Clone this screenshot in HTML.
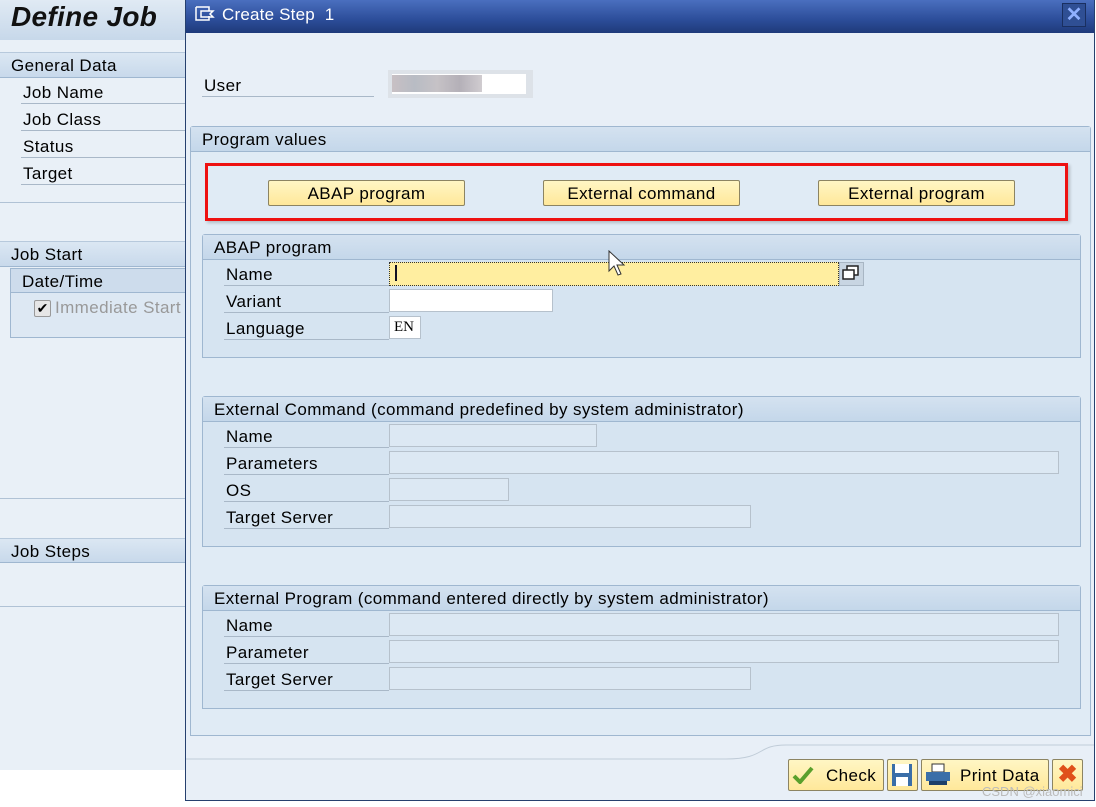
<!DOCTYPE html>
<html><head><meta charset="utf-8"><style>
*{box-sizing:border-box;margin:0;padding:0}
body{width:1096px;height:807px;position:relative;overflow:hidden;background:#fff;font-family:"Liberation Sans",Tahoma,sans-serif;font-size:17px;letter-spacing:0.4px;color:#000}
.a{position:absolute}
.lbl{position:absolute;height:24px;line-height:26px;border-bottom:1px solid #a9b8c8;padding-left:2px}
.fld{position:absolute;height:23px;border:1px solid #b6c1cc;background:#dce8f3}
.fw{background:#fff;border-color:#b6c1cc}
.grp{position:absolute;background:#d6e4f1;border:1px solid #9fb7d0;border-radius:3px 3px 0 0}
.gh{height:25px;line-height:25px;background:linear-gradient(#d4e2f0,#c4d7ea);border-bottom:1px solid #9fb7d0;padding-left:11px}
.btn{position:absolute;height:26px;border:1px solid #8c8462;border-radius:2px;background:linear-gradient(#fff6c4,#ffe89a);text-align:center;line-height:25px}
</style></head><body>
<div class="a" style="left:0;top:0;width:186px;height:770px;background:#e9f0f7"></div>
<div class="a" style="left:0;top:0;width:186px;height:40px;background:linear-gradient(#e0eaf4,#c7d8ea);"></div>
<div class="a" style="left:11px;top:1px;font-size:28px;font-weight:bold;font-style:italic;color:#111;letter-spacing:0.3px">Define Job</div>
<div class="a" style="left:0;top:52px;width:186px;height:26px;background:linear-gradient(#dbe7f3,#c8d9eb);border-top:1px solid #b7c9dc;border-bottom:1px solid #9fb7d0;padding-left:11px;line-height:25px">General Data</div>
<div class="lbl" style="left:21px;top:80px;width:165px">Job Name</div>
<div class="lbl" style="left:21px;top:107px;width:165px">Job Class</div>
<div class="lbl" style="left:21px;top:134px;width:165px">Status</div>
<div class="lbl" style="left:21px;top:161px;width:165px">Target</div>
<div class="a" style="left:0;top:202px;width:186px;border-top:1px solid #b0c2d5"></div>
<div class="a" style="left:0;top:241px;width:186px;height:26px;background:linear-gradient(#dbe7f3,#c8d9eb);border-top:1px solid #b7c9dc;border-bottom:1px solid #9fb7d0;padding-left:11px;line-height:25px">Job Start</div>
<div class="a" style="left:10px;top:268px;width:176px;height:70px;border:1px solid #9fb7d0;background:#dde8f3"></div>
<div class="a" style="left:11px;top:269px;width:175px;height:24px;background:#cddcec;border-bottom:1px solid #9fb7d0;padding-left:11px;line-height:25px">Date/Time</div>
<div class="a" style="left:34px;top:300px;width:17px;height:17px;border:1px solid #999;background:#e6e6e6;border-radius:2px;font-size:14px;line-height:15px;text-align:center;letter-spacing:0">✔</div>
<div class="a" style="left:55px;top:298px;color:#999">Immediate Start</div>
<div class="a" style="left:0;top:498px;width:186px;border-top:1px solid #b0c2d5"></div>
<div class="a" style="left:0;top:538px;width:186px;height:25px;background:linear-gradient(#dbe7f3,#c8d9eb);border-top:1px solid #b7c9dc;border-bottom:1px solid #9fb7d0;padding-left:11px;line-height:25px">Job Steps</div>
<div class="a" style="left:0;top:606px;width:186px;border-top:1px solid #b0c2d5"></div>

<div class="a" style="left:185px;top:0;width:910px;height:801px;background:#e8eff7;border:1px solid #26406e"></div>
<div class="a" style="left:186px;top:0;width:908px;height:33px;background:linear-gradient(#4a6fbf,#2c4d99 60%,#1e3a7a)"></div>
<svg class="a" style="left:195px;top:5px" width="22" height="18" viewBox="0 0 22 18"><path d="M1 2h13v4M1 2v13h13v-4M6 6h12l-3 3l3 3H6z" fill="none" stroke="#fff" stroke-width="1.5"/></svg>
<div class="a" style="left:222px;top:5px;color:#fff;font-size:17px;letter-spacing:0.2px">Create Step&nbsp; 1</div>
<div class="a" style="left:1062px;top:3px;width:24px;height:24px;background:#2f4f94;border:1px solid #1a2f60;color:#8fb0ff;font-size:20px;font-weight:bold;text-align:center;line-height:22px;letter-spacing:0">✕</div>

<div class="lbl" style="left:202px;top:73px;width:172px">User</div>
<div class="a" style="left:388px;top:70px;width:145px;height:28px;background:#dde2e8"></div>
<div class="a" style="left:392px;top:74px;width:134px;height:20px;background:#fff"></div>
<div class="a" style="left:392px;top:75px;width:90px;height:17px;background:linear-gradient(90deg,#c8c0c4,#b8bcc4,#c6c2c6,#b4b0b8,#d0ccd0)"></div>

<div class="grp" style="left:190px;top:126px;width:901px;height:610px;background:#e0ebf5"><div class="gh">Program values</div></div>
<div class="a" style="left:205px;top:163px;width:863px;height:58px;border:3px solid #ee1111;box-shadow:2px 2px 3px rgba(0,0,0,.2)"></div>
<div class="btn" style="left:268px;top:180px;width:197px">ABAP program</div>
<div class="btn" style="left:543px;top:180px;width:197px">External command</div>
<div class="btn" style="left:818px;top:180px;width:197px">External program</div>

<div class="grp" style="left:202px;top:234px;width:879px;height:124px"><div class="gh">ABAP program</div></div>
<div class="lbl" style="left:224px;top:262px;width:165px">Name</div>
<div class="lbl" style="left:224px;top:289px;width:165px">Variant</div>
<div class="lbl" style="left:224px;top:316px;width:165px">Language</div>
<div class="a" style="left:389px;top:262px;width:450px;height:24px;background:#ffeea0;border:1px dotted #333"></div>
<div class="a" style="left:395px;top:265px;width:2px;height:16px;background:#112"></div>
<div class="a" style="left:839px;top:262px;width:25px;height:24px;background:#c8d5e2;border:1px solid #a8b6c4"></div>
<svg class="a" style="left:842px;top:265px" width="18" height="16"><rect x="5" y="1" width="11" height="9" fill="#fff" stroke="#222" stroke-width="1.5"/><rect x="1" y="5" width="11" height="9" fill="#fff" stroke="#222" stroke-width="1.5"/></svg>
<div class="fld fw" style="left:389px;top:289px;width:164px"></div>
<div class="fld fw" style="left:389px;top:316px;width:32px;font-family:'Liberation Serif',serif;font-size:15px;line-height:21px;padding-left:4px;letter-spacing:0">EN</div>
<svg class="a" style="left:608px;top:250px" width="20" height="28"><path d="M1 1v20l5-5l4 9l3-1l-4-9h7z" fill="#fff" stroke="#333"/></svg>

<div class="grp" style="left:202px;top:396px;width:879px;height:151px"><div class="gh">External Command (command predefined by system administrator)</div></div>
<div class="lbl" style="left:224px;top:424px;width:165px">Name</div>
<div class="lbl" style="left:224px;top:451px;width:165px">Parameters</div>
<div class="lbl" style="left:224px;top:478px;width:165px">OS</div>
<div class="lbl" style="left:224px;top:505px;width:165px">Target Server</div>
<div class="fld" style="left:389px;top:424px;width:208px"></div>
<div class="fld" style="left:389px;top:451px;width:670px"></div>
<div class="fld" style="left:389px;top:478px;width:120px"></div>
<div class="fld" style="left:389px;top:505px;width:362px"></div>

<div class="grp" style="left:202px;top:585px;width:879px;height:124px"><div class="gh">External Program (command entered directly by system administrator)</div></div>
<div class="lbl" style="left:224px;top:613px;width:165px">Name</div>
<div class="lbl" style="left:224px;top:640px;width:165px">Parameter</div>
<div class="lbl" style="left:224px;top:667px;width:165px">Target Server</div>
<div class="fld" style="left:389px;top:613px;width:670px"></div>
<div class="fld" style="left:389px;top:640px;width:670px"></div>
<div class="fld" style="left:389px;top:667px;width:362px"></div>

<svg class="a" style="left:186px;top:740px" width="908" height="20"><path d="M0 19H540C580 19 570 5 600 5H908" fill="none" stroke="#c0ccd8"/></svg>
<div class="btn" style="left:788px;top:759px;width:96px;height:32px;line-height:31px;text-align:left;padding-left:37px">Check</div>
<svg class="a" style="left:792px;top:766px" width="22" height="18"><path d="M2 10l6 6L20 2" fill="none" stroke="#5aa02c" stroke-width="4"/></svg>
<div class="btn" style="left:887px;top:759px;width:31px;height:32px"></div>
<svg class="a" style="left:891px;top:763px" width="22" height="24"><rect x="1" y="1" width="20" height="22" fill="#3a6ea8"/><rect x="4" y="1" width="14" height="9" fill="#fff"/><rect x="5" y="14" width="12" height="9" fill="#fff"/></svg>
<div class="btn" style="left:921px;top:759px;width:128px;height:32px;line-height:31px;text-align:left;padding-left:38px">Print Data</div>
<svg class="a" style="left:925px;top:763px" width="26" height="24"><rect x="7" y="1" width="12" height="8" fill="#fff" stroke="#333"/><rect x="1" y="9" width="24" height="9" fill="#3a6ea8"/><rect x="4" y="18" width="18" height="4" fill="#1c3f6a"/></svg>
<div class="btn" style="left:1052px;top:759px;width:31px;height:32px;color:#e0501a;font-size:24px;font-weight:bold;line-height:30px;letter-spacing:0">✖</div>
<div class="a" style="left:982px;top:784px;color:#bbb;font-size:13px;letter-spacing:0">CSDN @xiaomici</div>
</body></html>
